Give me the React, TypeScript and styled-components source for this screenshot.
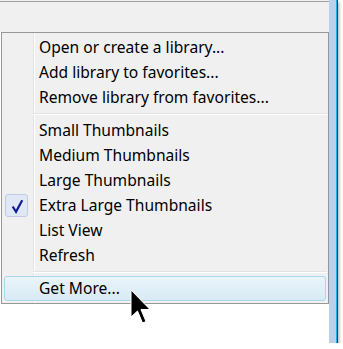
import styled, { createGlobalStyle } from "styled-components";

const GlobalStyle = createGlobalStyle`
  html, body {
    margin: 0;
    padding: 0;
    background: #ffffff;
  }
  body {
    font-family: "Noto Sans", "Liberation Sans", sans-serif;
  }
`;

type Item = { label: string; checked?: boolean; hover?: boolean } | "sep";

const items: Item[] = [
  { label: "Open or create a library..." },
  { label: "Add library to favorites..." },
  { label: "Remove library from favorites..." },
  "sep",
  { label: "Small Thumbnails" },
  { label: "Medium Thumbnails" },
  { label: "Large Thumbnails" },
  { label: "Extra Large Thumbnails", checked: true },
  { label: "List View" },
  { label: "Refresh" },
  "sep",
  { label: "Get More...", hover: true },
];

const App = () => {
  return (
    <>
      <GlobalStyle />
      <Frame>
        <Desktop>
          <TopBand />
          <Menu>
            {items.map((item, i) =>
              item === "sep" ? (
                <Separator key={i} />
              ) : (
                <MenuItem key={i} $hover={item.hover}>
                  {item.checked && (
                    <CheckBox>
                      <svg width="22" height="22" viewBox="0 0 22 22">
                        <polyline
                          points="7,11.5 10.5,17 17,5"
                          fill="none"
                          stroke="#101c94"
                          strokeWidth="2.3"
                          strokeLinejoin="miter"
                        />
                      </svg>
                    </CheckBox>
                  )}
                  <Label>{item.label}</Label>
                </MenuItem>
              )
            )}
            <Cursor>
              <svg width="22" height="37" viewBox="0 0 22 37">
                <path
                  d="M1 1 L1 28 L7.5 22 L12.5 34 L16 32.5 L11 20.5 L20 20.5 Z"
                  fill="#000"
                  stroke="#fff"
                  strokeWidth="1"
                  strokeLinejoin="miter"
                />
              </svg>
            </Cursor>
          </Menu>
          <Blank />
        </Desktop>
        <SideStrip />
      </Frame>
    </>
  );
};

const Frame = styled.div`
  width: 338px;
  height: 343px;
  display: flex;
  background: #ffffff;
  box-shadow: 1px 2px 3px rgba(0, 0, 0, 0.35);
`;

const Desktop = styled.div`
  width: 329px;
  display: flex;
  flex-direction: column;
`;

const TopBand = styled.div`
  height: 32px;
  background: linear-gradient(
    to bottom,
    #f0f0f0 1px,
    #a0a0a0 1px,
    #a0a0a0 2px,
    #f0f0f0 2px
  );
`;

const Menu = styled.div`
  position: relative;
  margin-left: 1px;
  width: 328px;
  box-sizing: border-box;
  padding: 2px 0;
  border: 1px solid #979797;
  background: linear-gradient(
    to right,
    #f0f0f0 31px,
    #e2e3e3 31px,
    #e2e3e3 32px,
    #ffffff 32px,
    #ffffff 33px,
    #f0f0f0 33px
  );
`;

const MenuItem = styled.div<{ $hover?: boolean }>`
  position: relative;
  height: 25px;
  margin: 0 2px;
  padding-left: 34px;
  box-sizing: border-box;
  display: flex;
  align-items: center;
  border-radius: 3px;
  border: 1px solid ${(p) => (p.$hover ? "#a8d8eb" : "transparent")};
  background: ${(p) =>
    p.$hover ? "linear-gradient(to bottom, #eaf4fb, #d8eaf4)" : "transparent"};
`;

const Label = styled.span`
  font-size: 15.6px;
  color: #000000;
  line-height: 25px;
  white-space: nowrap;
`;

const CheckBox = styled.div`
  position: absolute;
  left: 0;
  top: 0;
  width: 23px;
  height: 23px;
  box-sizing: border-box;
  border: 1px solid #c0cbe3;
  border-radius: 3px;
  background: #e0e7f5;
  display: flex;
  align-items: center;
  justify-content: center;
`;

const Separator = styled.div`
  height: 8px;
  margin-left: 31px;
  margin-right: 1px;
  background: linear-gradient(
    to bottom,
    transparent 3px,
    #e2e3e3 3px,
    #e2e3e3 4px,
    #ffffff 4px,
    #ffffff 5px,
    transparent 5px
  );
`;

const Cursor = styled.div`
  position: absolute;
  left: 128px;
  top: 256px;
  width: 22px;
  height: 37px;
  pointer-events: none;
`;

const Blank = styled.div`
  flex: 1;
  background: #ffffff;
`;

const SideStrip = styled.div`
  width: 9px;
  background: linear-gradient(
    to right,
    #b9d1ea 7px,
    #1ab0e8 7px,
    #1ab0e8 8px,
    #3a3a3a 8px
  );
`;

export default App;
